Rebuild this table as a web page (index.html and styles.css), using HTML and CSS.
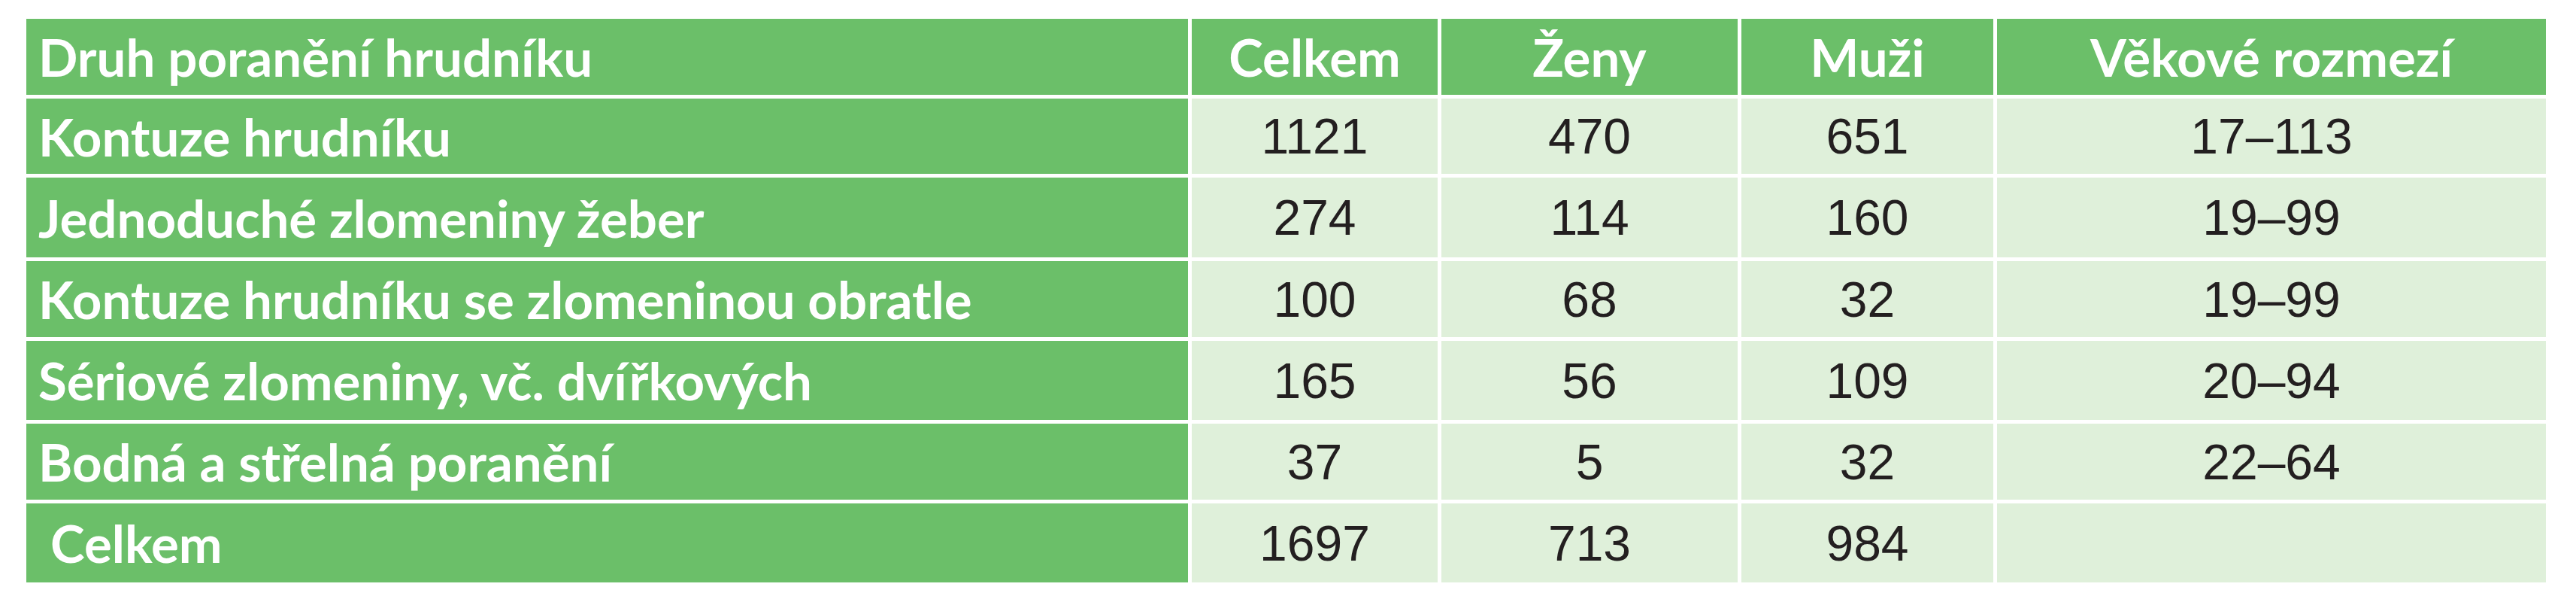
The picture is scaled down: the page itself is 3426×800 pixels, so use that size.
FILE: index.html
```html
<!DOCTYPE html>
<html lang="cs">
<head>
<meta charset="utf-8">
<title>Druh poranění hrudníku</title>
<link rel="stylesheet" href="styles.css">
</head>
<body>
<div class="table" role="table">
  <div class="cell head first" role="columnheader">Druh poranění hrudníku</div>
  <div class="cell head" role="columnheader">Celkem</div>
  <div class="cell head" role="columnheader">Ženy</div>
  <div class="cell head" role="columnheader">Muži</div>
  <div class="cell head" role="columnheader">Věkové rozmezí</div>

  <div class="cell label" role="rowheader">Kontuze hrudníku</div>
  <div class="cell data">1121</div>
  <div class="cell data">470</div>
  <div class="cell data">651</div>
  <div class="cell data">17–113</div>

  <div class="cell label" role="rowheader">Jednoduché zlomeniny žeber</div>
  <div class="cell data">274</div>
  <div class="cell data">114</div>
  <div class="cell data">160</div>
  <div class="cell data">19–99</div>

  <div class="cell label" role="rowheader">Kontuze hrudníku se zlomeninou obratle</div>
  <div class="cell data">100</div>
  <div class="cell data">68</div>
  <div class="cell data">32</div>
  <div class="cell data">19–99</div>

  <div class="cell label" role="rowheader">Sériové zlomeniny, vč. dvířkových</div>
  <div class="cell data">165</div>
  <div class="cell data">56</div>
  <div class="cell data">109</div>
  <div class="cell data">20–94</div>

  <div class="cell label" role="rowheader">Bodná a střelná poranění</div>
  <div class="cell data">37</div>
  <div class="cell data">5</div>
  <div class="cell data">32</div>
  <div class="cell data">22–64</div>

  <div class="cell label total" role="rowheader">Celkem</div>
  <div class="cell data">1697</div>
  <div class="cell data">713</div>
  <div class="cell data">984</div>
  <div class="cell data"></div>
</div>
</body>
</html>
```

FILE: styles.css
```css
html, body {
  margin: 0;
  padding: 0;
  background: #ffffff;
}

.table {
  display: grid;
  grid-template-columns: 1545px 327px 394px 335px 730px;
  grid-template-rows: 101px 100px 106px 101px 105px 101px 105px;
  column-gap: 5px;
  row-gap: 5px;
  margin: 25px 0 0 35px;
  width: max-content;
}

.cell {
  display: flex;
  align-items: center;
  justify-content: center;
  white-space: nowrap;
  box-sizing: border-box;
}

.head,
.label {
  background: #6bbf69;
  color: #ffffff;
  font-family: Lato, "Open Sans", sans-serif;
  font-weight: 700;
  font-size: 69px;
}

.first,
.label {
  justify-content: flex-start;
  padding-left: 16px;
}

.total {
  padding-left: 32px;
}

.data {
  background: #dff0da;
  color: #231f20;
  font-family: "Liberation Sans", Arial, sans-serif;
  font-weight: 400;
  font-size: 66px;
}
```
